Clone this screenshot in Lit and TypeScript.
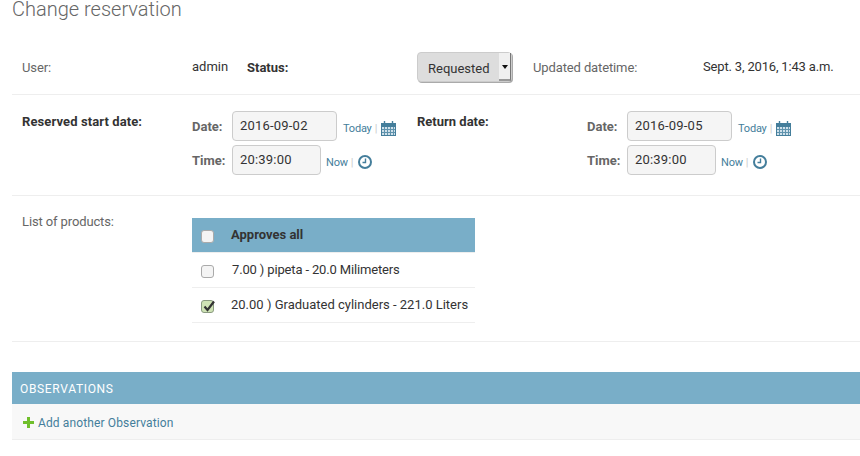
import { LitElement, html, css } from "lit";
import { customElement } from "lit/decorators.js";

const calendar = html`<svg class="ico" width="16" height="16" viewBox="0 0 16 16"><path fill="#447e9b" d="M1 3h15v13H1z"/><path fill="#cfe0ea" d="M2 7h13v8H2z"/><path stroke="#5f93ad" stroke-width="1" fill="none" d="M2 9.500h13M2 12.500h13M4.500 7v8M7.500 7v8M10.500 7v8M13.500 7v8"/><path stroke="#447e9b" stroke-width="1.4" fill="none" d="M4.500 1v3M12.500 1v3"/></svg>`;
const clock = html`<svg class="ico" width="14" height="14" viewBox="0 0 14 14"><circle cx="7" cy="7" r="6" fill="#fff" stroke="#447e9b" stroke-width="2"/><path d="M7.500 3.500v4H4.500" fill="none" stroke="#447e9b" stroke-width="1.400"/></svg>`;

@customElement("app-root")
export class AppRoot extends LitElement {
  static styles = css`
    :host { display: block; width: 860px; height: 456px; overflow: hidden; background: #fff; font-family: Roboto, sans-serif; font-size: 13px; color: #333; }
    .page { padding-left: 12px; }
    h1 { margin: 0; height: 52px; box-sizing: border-box; font-size: 20px; line-height: 18px; font-weight: 300; color: #666; }
    .row { display: flex; box-sizing: border-box; border-bottom: 1px solid #eee; padding-left: 10px; }
    .r1 { height: 43px; align-items: center; padding-bottom: 11px; }
    .r2 { height: 101px; padding-top: 16px; }
    .r3 { height: 146px; padding-top: 23px; }
    .lab { color: #666; width: 170px; flex: none; letter-spacing: -0.12px; }
    .listlab { margin-top: -5px; }
    .b { font-weight: 700; color: #333; }
    .user { position: relative; top: -1px; width: 55px; }
    .status { width: 170px; flex: none; }
    .select { box-sizing: border-box; width: 95px; height: 30px; flex: none; align-self: flex-start; display: flex; align-items: center; justify-content: space-between; background: #ddd; border: 1px solid #ccc; border-radius: 4px; padding-left: 10px; color: #333; box-shadow: 1px 1px 0 #aaa; }
    .select span:first-child { margin-top: 2px; }
    .arrow { width: 12px; height: 28px; background: #f0f0f0; border-right: 1px solid #777; border-bottom: 2px solid #999; display: flex; justify-content: center; padding-top: 12px; box-sizing: border-box; }
    .arrow i { width: 0; height: 0; border: 3px solid transparent; border-top: 4px solid #111; border-bottom: 0; }
    .updated { margin-left: 21px; width: 170px; }
    .val { position: relative; top: -1px; }
    .date-val { letter-spacing: -0.17px; }
    .sec { display: flex; width: 395px; flex: none; }
    .title { width: 170px; flex: none; font-weight: 700; color: #333; margin-top: 3px; letter-spacing: 0.1px; }
    .rlab { width: 170px; flex: none; font-weight: 700; color: #333; margin-top: 3px; }
    .fields { display: flex; flex-direction: column; gap: 4px; }
    .fline { display: flex; align-items: center; }
    .fl { width: 40px; flex: none; font-weight: 700; color: #666; margin-top: 1px; }
    .in { box-sizing: border-box; height: 30px; border: 1px solid #ccc; border-radius: 4px; background: #f5f5f5; padding: 0 7px; line-height: 28px; color: #333; letter-spacing: 0.2px; }
    .date { width: 105px; }
    .time { width: 89px; }
    .sm { font-size: 11px; color: #447e9b; margin: 4px 0 0 5px; display: inline-flex; align-items: center; letter-spacing: -0.2px; }
    .date + .sm { margin-left: 6px; }
    .sep { color: #ccc; margin: 0 5px 0 3px; }
    .date + .sm .sep { margin-right: 3px; }
    .ico { display: block; }
    .tbl { width: 283px; margin-top: -1px; }
    .th { height: 35px; background: #79aec8; border-bottom: 1px solid #eee; box-sizing: border-box; display: flex; align-items: center; padding-left: 9px; padding-bottom: 2px; font-weight: 700; color: #333; }
    .tr { height: 35px; box-sizing: border-box; border-bottom: 1px solid #eee; display: flex; align-items: center; padding: 0 0 2px 9px; }
    .tight { letter-spacing: -0.15px; margin-left: 1px; }
    .cb { width: 13px; height: 13px; flex: none; box-sizing: border-box; background: #f4f4f4; border: 1px solid #aaa; border-radius: 3px; margin: 4px 17px 0 0; }
    .tr .cb { margin-top: 5px; }
    .chk { position: relative; background: #cfe3b5; border-color: #8a9a80; }
    .chk svg { position: absolute; left: 0; top: 0; overflow: visible; }
    .mod { margin-top: 30px; height: 32px; box-sizing: border-box; background: #79aec8; color: #fff; font-size: 12px; font-weight: 400; letter-spacing: 0.67px; padding: 2px 8px 0; display: flex; align-items: center; }
    .add { height: 36px; box-sizing: border-box; background: #f8f8f8; border-bottom: 1px solid #eee; display: flex; align-items: center; padding: 2px 0 0 11px; color: #447e9b; font-size: 12px; letter-spacing: 0.13px; gap: 4px; }
  `;

  private field(label: string, cls: string, value: string, link: string, icon: unknown) {
    return html`<div class="fline"><span class="fl">${label}</span><div class="in ${cls}">${value}</div><span class="sm">${link}<span class="sep">|</span>${icon}</span></div>`;
  }

  render() {
    return html`<div class="page">
      <h1>Change reservation</h1>
      <div class="row r1">
        <span class="lab">User:</span><span class="val user">admin</span>
        <span class="b status">Status:</span>
        <div class="select"><span>Requested</span><span class="arrow"><i></i></span></div>
        <span class="lab updated">Updated datetime:</span><span class="val date-val">Sept. 3, 2016, 1:43 a.m.</span>
      </div>
      <div class="row r2">
        <div class="sec"><span class="title">Reserved start date:</span>
          <div class="fields">${this.field("Date:", "date", "2016-09-02", "Today", calendar)}${this.field("Time:", "time", "20:39:00", "Now", clock)}</div></div>
        <span class="rlab">Return date:</span>
        <div class="fields">${this.field("Date:", "date", "2016-09-05", "Today", calendar)}${this.field("Time:", "time", "20:39:00", "Now", clock)}</div>
      </div>
      <div class="row r3">
        <span class="lab listlab">List of products:</span>
        <div class="tbl">
          <div class="th"><span class="cb"></span>Approves all</div>
          <div class="tr"><span class="cb"></span><span class="tight">7.00 ) pipeta - 20.0 Milimeters</span></div>
          <div class="tr"><span class="cb chk"><svg width="13" height="13" viewBox="0 0 13 13"><path d="M2.500 5.500l3 3.500L12 0.500" fill="none" stroke="#333" stroke-width="2.200"/></svg></span>20.00 ) Graduated cylinders - 221.0 Liters</div>
        </div>
      </div>
      <div class="mod">OBSERVATIONS</div>
      <div class="add"><svg width="11" height="11" viewBox="0 0 11 11"><path d="M4 0h3v4h4v3H7v4H4V7H0V4h4z" fill="#70bf2b"/></svg><span>Add another Observation</span></div>
    </div>`;
  }
}
